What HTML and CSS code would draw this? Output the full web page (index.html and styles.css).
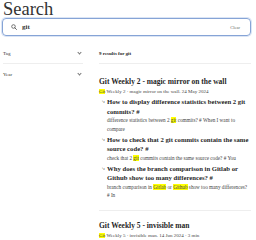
FILE: index.html
```html
<!DOCTYPE html>
<html lang="en">
<head>
<meta charset="utf-8">
<title>Search</title>
<link rel="stylesheet" href="styles.css">
</head>
<body>
<main class="page">
  <h1 class="title">Search</h1>
  <div class="search">
    <form class="search-form">
      <svg class="search-icon" width="6" height="6" viewBox="0 0 12 12"><circle cx="5" cy="5" r="3.6" fill="none" stroke="#555" stroke-width="1.6"/><path d="M7.6 7.6 L11 11" stroke="#555" stroke-width="1.8" stroke-linecap="round"/></svg>
      <span class="query">git</span>
      <span class="clear">Clear</span>
    </form>
    <div class="drawer">
      <aside class="filters">
        <div class="filter">Tag<span class="chev"></span></div>
        <div class="filter">Year<span class="chev"></span></div>
      </aside>
      <section class="results">
        <p class="count">9 results for git</p>
        <ol class="list">
          <li class="result">
            <p class="r-title">Git Weekly 2 - magic mirror on the wall</p>
            <p class="r-meta"><mark>Git</mark> Weekly 2 · magic mirror on the wall. 24 May 2024</p>
            <div class="nested">
              <p class="n-title">How to display difference statistics between 2 git commits? #</p>
              <p class="n-text">difference statistics between 2 <mark>git</mark> <span>commits? # When I want to</span> <span>compare</span></p>
            </div>
            <div class="nested">
              <p class="n-title">How to check that 2 git commits contain the same source code? #</p>
              <p class="n-text">check that 2 <mark>git</mark> commits contain the same source code? # You</p>
            </div>
            <div class="nested">
              <p class="n-title">Why does the branch comparison in Gitlab or Github show too many differences? #</p>
              <p class="n-text">branch comparison in <mark>Gitlab</mark> or <mark>Github</mark> show too many differences?<br># In</p>
            </div>
          </li>
          <li class="result">
            <p class="r-title">Git Weekly 5 - invisible man</p>
            <p class="r-meta"><mark>Git</mark> Weekly 5 · invisible man. 14 Jun 2024 · 3 min</p>
          </li>
        </ol>
      </section>
    </div>
  </div>
</main>
</body>
</html>
```
FILE: styles.css
```css
* { box-sizing: border-box; }
html, body { margin: 0; padding: 0; background: #fff; }
body {
  font-family: "Liberation Serif", "DejaVu Serif", serif;
  color: #1f1f1f;
}
p { margin: 0; }
.page { padding: 0 5px 0 3px; }
.title {
  margin: 0;
  font-size: 18.5px;
  font-weight: normal;
  line-height: 17px;
  padding-top: 1px;
  color: #333;
}
.search-form {
  display: flex;
  align-items: center;
  height: 18px;
  border: 1.5px solid #86a4d6;
  box-shadow: 0 0 0 1px #dbe5f5;
  border-radius: 4px;
  padding: 0 10px 0 8px;
  margin-left: -1px;
}
.search-icon { flex: none; }
.query {
  margin-left: 5px;
  font-size: 7px;
  font-weight: bold;
  color: #333;
  flex: 1;
}
.clear { font-size: 4.5px; color: #666; }
.drawer {
  display: flex;
  gap: 16px;
  margin-top: 8px;
}
.filters { width: 80px; flex: none; }
.filter {
  display: flex;
  justify-content: space-between;
  align-items: center;
  height: 20px;
  font-size: 5px;
  color: #333;
  border-bottom: 1px solid #eee;
  padding-right: 2px;
}
.filter + .filter { border-bottom: none; }
.chev {
  width: 3px; height: 3px;
  border-right: 1px solid #777;
  border-bottom: 1px solid #777;
  transform: rotate(45deg);
  margin-top: -2px;
}
.results { flex: 1; }
.count {
  height: 20px;
  display: flex;
  align-items: center;
  font-size: 5px;
  font-weight: bold;
  border-bottom: 1px solid #eee;
}
.list { list-style: none; margin: 0; padding: 0; }
.result { padding: 13px 0 9px; border-bottom: 1px solid #eee; }
.result:last-child { border-bottom: none; padding-top: 10px; }
.r-title { font-size: 7.5px; font-weight: bold; line-height: 10px; }
.r-meta { font-size: 5px; line-height: 10px; color: #444; }
mark { background: #ff0; color: inherit; padding: 0; }
.nested { padding-left: 8px; position: relative; }
.n-title { font-size: 6.7px; font-weight: bold; line-height: 9.5px; position: relative; }
.n-title::before {
  content: "\2937";
  position: absolute;
  left: -5px;
  font-size: 5px;
  font-family: "DejaVu Sans", sans-serif;
  font-weight: normal;
}
.n-text { font-size: 5.2px; line-height: 8.5px; padding-bottom: 1.5px; color: #444; }
```
